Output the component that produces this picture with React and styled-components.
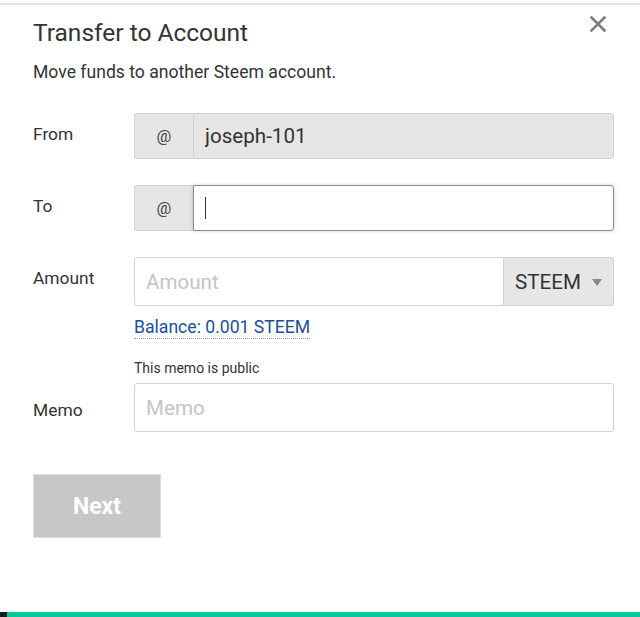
import React from "react";
import styled, { createGlobalStyle } from "styled-components";

const GlobalStyle = createGlobalStyle`
  html, body {
    margin: 0;
    padding: 0;
    background: #fff;
  }
  body {
    font-family: Roboto, "Liberation Sans", sans-serif;
    color: #333;
  }
`;

const Page = styled.div`
  min-height: 100vh;
  display: flex;
  flex-direction: column;
  padding-top: 3px;
  box-sizing: border-box;
`;

const Modal = styled.div`
  border-top: 2px solid #e4e4e4;
  padding: 13px 26px 0 33px;
`;

const Header = styled.div`
  display: flex;
  justify-content: space-between;
  align-items: flex-start;
`;

const Title = styled.h2`
  margin: 0;
  font-size: 24.5px;
  line-height: 29px;
  font-weight: 400;
  color: #333;
`;

const CloseButton = styled.button`
  border: none;
  background: none;
  padding: 0;
  margin: -2px 8px 0 0;
  width: 16px;
  height: 16px;
  display: flex;
  cursor: pointer;
`;

const Subtitle = styled.p`
  margin: 13px 0 0;
  font-size: 17.6px;
  line-height: 24px;
`;

const Form = styled.form`
  margin-top: 29px;
  display: flex;
  flex-direction: column;
`;

const Row = styled.div`
  display: grid;
  grid-template-columns: 101px 1fr;
  margin-top: ${(p) => p.$gap || 0}px;
`;

const Label = styled.label`
  font-size: 17.4px;
  line-height: 24px;
  padding-top: ${(p) => (p.$end ? 0 : 9)}px;
  padding-bottom: ${(p) => (p.$end ? 10 : 0)}px;
  align-self: ${(p) => (p.$end ? "end" : "start")};
`;

const Control = styled.div`
  display: flex;
  flex-direction: column;
`;

const Group = styled.div`
  display: flex;
  height: ${(p) => p.$h || 46}px;
`;

const Addon = styled.span`
  width: 58px;
  flex: none;
  display: flex;
  align-items: center;
  justify-content: center;
  background: #e6e6e6;
  border: 1px solid #d2d2d2;
  border-right: none;
  border-radius: 3px 0 0 3px;
  font-size: 16.5px;
  color: #444;
`;

const Input = styled.input`
  flex: 1;
  min-width: 0;
  box-sizing: border-box;
  height: 100%;
  padding: 0 11px;
  font-family: inherit;
  font-size: 20.6px;
  color: #333;
  background: ${(p) => (p.readOnly ? "#e6e6e6" : "#fff")};
  border: 1px solid #d2d2d2;
  border-radius: ${(p) => p.$radius || "3px"};
  outline: none;
  &::placeholder {
    color: #c4c4c4;
  }
`;

const Caret = styled.span`
  display: block;
  width: 1px;
  height: 22px;
  background: #333;
`;

const FocusedInput = styled.div`
  flex: 1;
  display: flex;
  align-items: center;
  padding: 0 11px;
  border: 1px solid #8c8c8c;
  border-radius: 0 3px 3px 0;
  box-shadow: 0 0 4px rgba(0, 0, 0, 0.18);
  background: #fff;
`;

const Select = styled.div`
  width: 110px;
  flex: none;
  box-sizing: border-box;
  display: flex;
  align-items: center;
  justify-content: space-between;
  padding: 0 11px;
  background: #e6e6e6;
  border: 1px solid #d2d2d2;
  border-left: none;
  border-radius: 0 3px 3px 0;
  font-size: 20.6px;
  color: #333;
`;

const Arrow = styled.span`
  width: 0;
  height: 0;
  border-left: 5px solid transparent;
  border-right: 5px solid transparent;
  border-top: 7px solid #888;
  margin-top: 1px;
`;

const Balance = styled.a`
  align-self: flex-start;
  margin-top: 10px;
  font-size: 17.6px;
  line-height: 22px;
  color: #1a4f9b;
  text-decoration: none;
  border-bottom: 1px dotted #999;
`;

const Note = styled.div`
  font-size: 14px;
  line-height: 16px;
  margin-bottom: 7px;
`;

const NextButton = styled.button`
  margin-top: 42px;
  width: 128px;
  height: 64px;
  border: 1px solid #dcdcdc;
  background: #c6c7c9;
  color: #fff;
  font-family: inherit;
  font-size: 23px;
  font-weight: 700;
  cursor: not-allowed;
`;

const FooterBar = styled.div`
  margin-top: auto;
  height: 5px;
  display: flex;
`;

const BarSegment = styled.div`
  flex: ${(p) => (p.$grow ? 1 : "none")};
  width: ${(p) => (p.$grow ? "auto" : "7px")};
  background: ${(p) => p.$color};
`;

const CloseIcon = () => (
  <svg width="16" height="16" viewBox="0 0 16 16">
    <path d="M1.5 1.5 L14.5 14.5 M14.5 1.5 L1.5 14.5" stroke="#7c7c7c" strokeWidth="2.6" strokeLinecap="square" />
  </svg>
);

export default function App() {
  return (
    <Page>
      <GlobalStyle />
      <Modal>
        <Header>
          <Title>Transfer to Account</Title>
          <CloseButton aria-label="Close">
            <CloseIcon />
          </CloseButton>
        </Header>
        <Subtitle>Move funds to another Steem account.</Subtitle>

        <Form onSubmit={(e) => e.preventDefault()}>
          <Row>
            <Label>From</Label>
            <Group>
              <Addon>@</Addon>
              <Input readOnly value="joseph-101" $radius="0 3px 3px 0" />
            </Group>
          </Row>

          <Row $gap={26}>
            <Label>To</Label>
            <Group>
              <Addon>@</Addon>
              <FocusedInput>
                <Caret />
              </FocusedInput>
            </Group>
          </Row>

          <Row $gap={26}>
            <Label>Amount</Label>
            <Control>
              <Group $h={49}>
                <Input placeholder="Amount" $radius="3px 0 0 3px" />
                <Select>
                  STEEM <Arrow />
                </Select>
              </Group>
              <Balance href="#">Balance: 0.001 STEEM</Balance>
            </Control>
          </Row>

          <Row $gap={21}>
            <Label $end>Memo</Label>
            <Control>
              <Note>This memo is public</Note>
              <Group $h={49}>
                <Input placeholder="Memo" />
              </Group>
            </Control>
          </Row>

          <div>
            <NextButton type="submit" disabled>
              Next
            </NextButton>
          </div>
        </Form>
      </Modal>
      <FooterBar>
        <BarSegment $color="#1a1a1a" />
        <BarSegment $grow $color="#06c9a0" />
      </FooterBar>
    </Page>
  );
}
